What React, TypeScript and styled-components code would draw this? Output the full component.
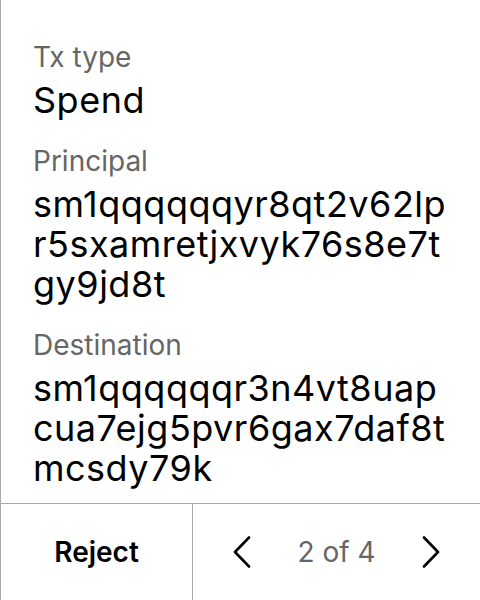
import styled, { createGlobalStyle } from "styled-components";

const GlobalStyle = createGlobalStyle`
  html, body {
    margin: 0;
    padding: 0;
    background: #ffffff;
  }
  body {
    font-family: Inter, "Noto Sans", sans-serif;
    -webkit-font-smoothing: antialiased;
  }
`;

const Panel = styled.div`
  width: 480px;
  height: 600px;
  box-sizing: border-box;
  border-left: 1px solid #a8a8a8;
  display: flex;
  flex-direction: column;
`;

const Details = styled.div`
  flex: 1;
  padding: 40px 32px 0 32px;
  display: flex;
  flex-direction: column;
  gap: 24px;
  overflow: hidden;
`;

const Field = styled.div`
  display: flex;
  flex-direction: column;
  gap: 6px;
`;

const Label = styled.div`
  font-size: 28px;
  line-height: 34px;
  color: #666666;
`;

const Value = styled.div`
  font-size: 36px;
  line-height: 40px;
  letter-spacing: 0.5px;
  color: #000000;
  word-break: break-all;
`;

const Footer = styled.div`
  height: 96px;
  flex-shrink: 0;
  border-top: 1px solid #a8a8a8;
  display: grid;
  grid-template-columns: 192px 1fr;
`;

const RejectButton = styled.button`
  all: unset;
  display: flex;
  align-items: center;
  justify-content: center;
  border-right: 1px solid #a8a8a8;
  font-size: 28px;
  font-weight: 600;
  color: #000000;
  cursor: pointer;
`;

const Pager = styled.div`
  display: flex;
  align-items: center;
  justify-content: center;
  gap: 46px;
`;

const PageLabel = styled.span`
  font-size: 28px;
  color: #666666;
`;

const ArrowButton = styled.button`
  all: unset;
  display: flex;
  align-items: center;
  justify-content: center;
  width: 18px;
  height: 32px;
  cursor: pointer;
`;

function Chevron({ dir }: { dir: "left" | "right" }) {
  const pts = dir === "left" ? "16,1.5 2,16 16,30.5" : "2,1.5 16,16 2,30.5";
  return (
    <svg width="18" height="32" viewBox="0 0 18 32">
      <polyline points={pts} fill="none" stroke="#000" strokeWidth="2.6" strokeLinecap="round" strokeLinejoin="round" />
    </svg>
  );
}

const fields = [
  { label: "Tx type", value: "Spend" },
  { label: "Principal", value: "sm1qqqqqqyr8qt2v62lpr5sxamretjxvyk76s8e7tgy9jd8t" },
  { label: "Destination", value: "sm1qqqqqqr3n4vt8uapcua7ejg5pvr6gax7daf8tmcsdy79k" },
];

function App() {
  return (
    <>
      <GlobalStyle />
      <Panel>
        <Details>
          {fields.map((f) => (
            <Field key={f.label}>
              <Label>{f.label}</Label>
              <Value>{f.value}</Value>
            </Field>
          ))}
        </Details>
        <Footer>
          <RejectButton>Reject</RejectButton>
          <Pager>
            <ArrowButton>
              <Chevron dir="left" />
            </ArrowButton>
            <PageLabel>2 of 4</PageLabel>
            <ArrowButton>
              <Chevron dir="right" />
            </ArrowButton>
          </Pager>
        </Footer>
      </Panel>
    </>
  );
}

export default App;
